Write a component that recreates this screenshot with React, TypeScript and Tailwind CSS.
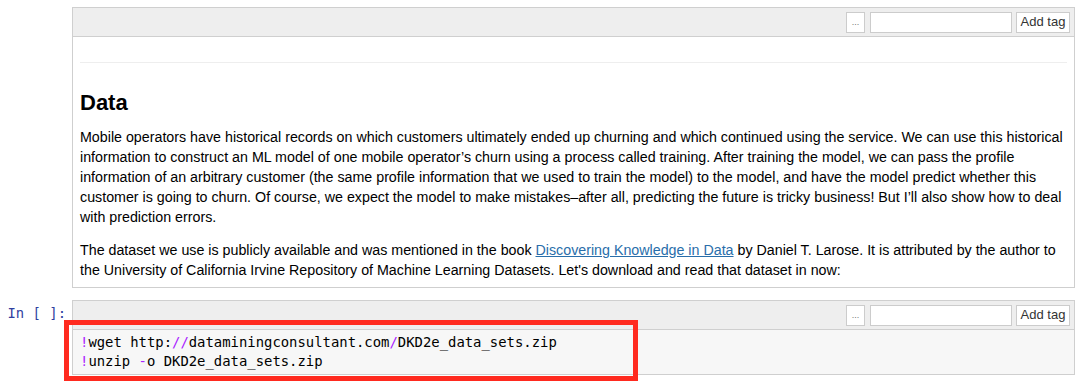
import React from "react";

const sans = { fontFamily: '"Liberation Sans", Arial, Helvetica, sans-serif' };
const mono = { fontFamily: '"DejaVu Sans Mono", Menlo, monospace' };

function Toolbar() {
  return (
    <div className="h-[29px] bg-[#eeeeee] border-b border-[#cfcfcf] flex items-center justify-end pr-[4px]">
      <div className="w-[19px] h-[21px] bg-white border border-[#cccccc] flex items-end justify-center pb-[5px] text-[9px] leading-none text-[#777]" style={sans}>
        ...
      </div>
      <div className="w-[142px] h-[21px] bg-white border border-[#cccccc] ml-[5px]" />
      <div className="w-[54px] h-[21px] bg-white border border-[#cccccc] ml-[4px] flex items-center justify-center text-[13px] text-[#333]" style={sans}>
        Add tag
      </div>
    </div>
  );
}

const P = "text-[#AA22FF]";

export default function App() {
  return (
    <div className="relative w-full h-[381px] bg-white overflow-hidden" style={sans}>
      <div className="pt-[7px] flex flex-col gap-[12px]">
        {/* Markdown cell */}
        <div className="flex">
          <div className="w-[72px] shrink-0" />
          <div className="w-[1003px] border border-[#cfcfcf]">
            <Toolbar />
            <div className="px-[7px] pb-[7px] text-black whitespace-nowrap">
              <div className="mt-[25px] h-px bg-[#eeeeee]" />
              <h2 className="mt-[27px] text-[22px] leading-[26px] font-bold">Data</h2>
              <p className="mt-[11px] text-[14.25px] leading-[20px]">
                Mobile operators have historical records on which customers ultimately ended up churning and which continued using the service. We can use this historical
                <br />
                information to construct an ML model of one mobile operator’s churn using a process called training. After training the model, we can pass the profile
                <br />
                information of an arbitrary customer (the same profile information that we used to train the model) to the model, and have the model predict whether this
                <br />
                customer is going to churn. Of course, we expect the model to make mistakes–after all, predicting the future is tricky business! But I’ll also show how to deal
                <br />
                with prediction errors.
              </p>
              <p className="mt-[13px] text-[14.25px] leading-[20px]">
                The dataset we use is publicly available and was mentioned in the book{" "}
                <a className="text-[#296eaa] underline">Discovering Knowledge in Data</a> by Daniel T. Larose. It is attributed by the author to
                <br />
                the University of California Irvine Repository of Machine Learning Datasets. Let's download and read that dataset in now:
              </p>
            </div>
          </div>
        </div>

        {/* Code cell */}
        <div className="flex">
          <div className="w-[72px] shrink-0 pr-[6px] pt-[4px] text-right text-[13.9px] leading-[19px] text-[#303F9F]" style={mono}>
            In&nbsp;[&nbsp;]:
          </div>
          <div className="w-[1003px] border border-[#cfcfcf]">
            <Toolbar />
            <div className="bg-[#f7f7f7] px-[7px] pt-[3px] pb-[3px] text-[13.9px] leading-[19px] text-black whitespace-pre" style={mono}>
              <div>
                <span className={P}>!</span>wget http:<span className={P}>//</span>dataminingconsultant.com<span className={P}>/</span>DKD2e_data_sets.zip
              </div>
              <div>
                <span className={P}>!</span>unzip <span className={P}>-</span>o DKD2e_data_sets.zip
              </div>
            </div>
          </div>
        </div>
      </div>

      {/* red annotation box */}
      <div className="absolute left-[64px] top-[320px] w-[574px] h-[61px] border-[5px] border-[#ff2a1f]" />
    </div>
  );
}
